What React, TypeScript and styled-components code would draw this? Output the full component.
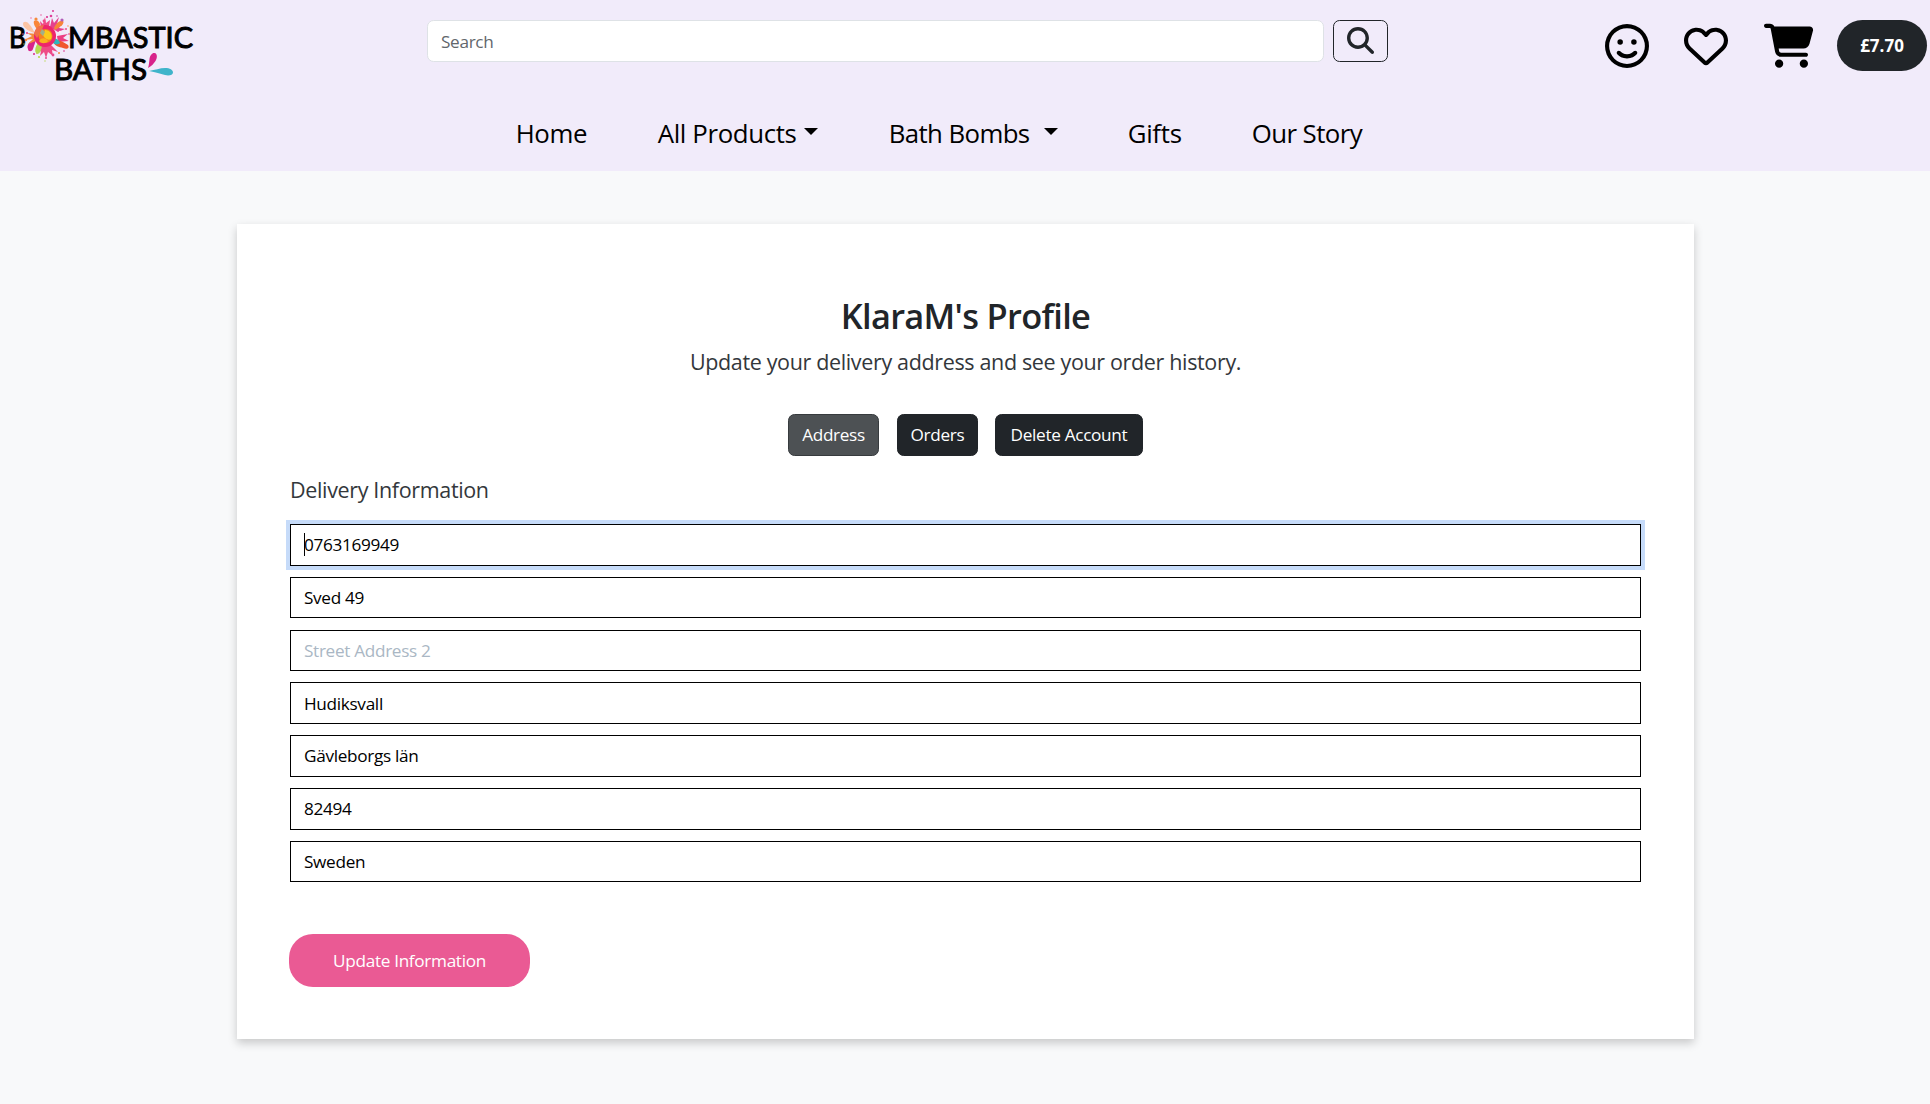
import React from "react";
import styled, { createGlobalStyle } from "styled-components";
import { FaRegFaceSmile, FaRegHeart, FaCartShopping, FaMagnifyingGlass } from "react-icons/fa6";

const GlobalStyle = createGlobalStyle`
  *, *::before, *::after { box-sizing: border-box; }
  html, body { margin: 0; padding: 0; }
  body {
    background: #f8f9fa;
    color: #212529;
    font-family: "Open Sans", "Noto Sans", sans-serif;
    font-size: 17.2px;
    line-height: 26.4px;
    letter-spacing: -0.32px;
    overflow: hidden;
  }
  button, input { font: inherit; letter-spacing: inherit; margin: 0; }
`;

const Page = styled.div`
  min-height: 1104px;
  display: flex;
  flex-direction: column;
`;

const Header = styled.header`
  height: 171px;
  background: #f1ebfa;
  display: flex;
  flex-direction: column;
`;

const TopRow = styled.div`
  height: 92px;
  display: grid;
  grid-template-columns: 427px 961px 1fr;
`;

const LogoLink = styled.a`
  display: block;
  width: 210px;
  height: 92px;
`;

const SearchForm = styled.form`
  display: flex;
  gap: 9px;
  padding-top: 20px;
  align-items: flex-start;
`;

const SearchInput = styled.input`
  flex: 1;
  height: 42px;
  border: 1px solid #dee2e6;
  border-radius: 6.6px;
  padding: 0 13px;
  outline: none;
  &::placeholder { color: #62676c; opacity: 1; }
`;

const SearchButton = styled.button`
  width: 55px;
  height: 42px;
  display: flex;
  align-items: center;
  justify-content: center;
  border: 1px solid #212529;
  border-radius: 6.6px;
  background: transparent;
  color: #212529;
  font-size: 27px;
  padding: 0 0 1px;
`;

const Actions = styled.div`
  display: flex;
  justify-content: flex-end;
  padding: 20px 3px 0 0;
`;

const IconLink = styled.a<{ $gap: number; $size?: number }>`
  display: flex;
  height: 51px;
  align-items: center;
  color: #000;
  font-size: ${(p) => p.$size ?? 44}px;
  margin-right: ${(p) => p.$gap}px;
`;

const Total = styled.a`
  width: 90px;
  height: 51px;
  padding-top: 1px;
  border-radius: 26px;
  background: #212529;
  color: #fff;
  font-weight: 700;
  font-size: 17px;
  letter-spacing: 0;
  display: flex;
  align-items: center;
  justify-content: center;
`;

const Nav = styled.nav`
  display: flex;
  align-items: flex-start;
  height: 79px;
  padding: 23px 0 0 515.7px;
  font-size: 25.8px;
  line-height: 36px;
  color: #000;
`;

const NavItem = styled.a<{ $width: number; $spacing: number }>`
  display: flex;
  align-items: center;
  height: 36px;
  width: ${(p) => p.$width}px;
  letter-spacing: ${(p) => p.$spacing}px;
  white-space: nowrap;
`;

const Caret = styled.span<{ $gap: number }>`
  margin: -3px 0 0 ${(p) => p.$gap}px;
  border: 7px solid transparent;
  border-top-color: #000;
  border-bottom: 0;
`;

const Card = styled.main`
  width: 1457px;
  height: 815px;
  margin: 53px 0 0 237px;
  padding: 68px 53px 0;
  background: #fff;
  box-shadow: 0 4px 9px rgba(0, 0, 0, 0.2);
`;

const Title = styled.h1`
  margin: 0;
  font-size: 34.4px;
  line-height: 48px;
  font-weight: 600;
  letter-spacing: -0.68px;
  text-align: center;
  white-space: nowrap;
`;

const Lead = styled.p`
  margin: 5px 0 0;
  font-size: 21.5px;
  line-height: 33px;
  letter-spacing: -0.35px;
  text-align: center;
  white-space: nowrap;
  color: #33373b;
`;

const Tabs = styled.div`
  display: flex;
  justify-content: center;
  margin-top: 36px;
`;

const Tab = styled.button<{ $width: number; $active?: boolean }>`
  width: ${(p) => p.$width}px;
  height: 42px;
  padding: 0;
  border: 1px solid ${(p) => (p.$active ? "#373b3e" : "#212529")};
  border-radius: 6.6px;
  background: ${(p) => (p.$active ? "#4d5154" : "#212529")};
  color: #fff;
  white-space: nowrap;
  & + & { margin-left: 18px; }
  &:last-child { margin-left: 17px; }
`;

const FormTitle = styled.p`
  margin: 17px 0 0;
  height: 51px;
  font-size: 21.5px;
  line-height: 33px;
  letter-spacing: -0.35px;
  color: #33373b;
`;

const Fields = styled.div`
  display: flex;
  flex-direction: column;
  gap: 11.2px;
`;

const Field = styled.input`
  width: 1351px;
  height: 41.6px;
  border: 1px solid #000;
  border-radius: 0;
  padding: 0 13px;
  background: #fff;
  color: #000;
  outline: none;
  &::placeholder { color: #aab7c4; opacity: 1; }
`;

const FocusedField = styled(Field).attrs({ as: "div" })`
  display: flex;
  align-items: center;
  padding-top: 1px;
  box-shadow: 0 0 0 4px #c6dbf9;
`;

const TextCursor = styled.span`
  width: 1px;
  height: 23px;
  margin: -2px -1px 0 0;
  background: #000;
`;

const SubmitButton = styled.button`
  width: 241px;
  height: 53px;
  margin: 51.4px 0 0 -1px;
  padding: 2px 0 0;
  border: 0;
  border-radius: 24px;
  background: #ea5a94;
  color: #fff;
`;

const LogoText = styled.text`
  font-family: "Lato", sans-serif;
  font-size: 29px;
  font-weight: 400;
  letter-spacing: 0;
  stroke: #000;
  stroke-width: 1px;
`;

const specks: [number, number, number, string][] = [
  [53, 11, 0.9, "#d9268a"], [51, 16, 1.3, "#e0409a"], [47, 17, 1, "#d9268a"], [41, 15, 0.8, "#e8609f"],
  [57, 16, 0.8, "#c73fa0"], [62, 20, 1.6, "#b05cb8"], [66, 29, 1, "#ef4f8a"], [69, 34, 0.8, "#d9268a"],
  [36, 19, 1.6, "#f58a3c"], [31, 18, 0.7, "#f0609a"], [23, 34, 0.8, "#e8609f"], [26, 40, 1.2, "#f58a3c"],
  [24, 44, 0.7, "#b7d84b"], [34, 54, 1, "#d9268a"], [39, 57, 1.1, "#b7d84b"], [46, 58, 1, "#e84a93"],
  [45, 61, 0.7, "#b7d84b"], [53, 55, 1.4, "#e8488f"], [59, 53, 1, "#f58a3c"], [64, 51, 0.8, "#d9268a"],
  [60, 32, 1.2, "#fff0f5"], [27, 33, 1, "#e33a83"], [44, 21, 1.4, "#f04b86"], [68, 26, 0.7, "#f58a3c"],
];

function Logo() {
  return (
    <svg width="210" height="92" viewBox="0 0 210 92">
      <LogoText x="9" y="47.800" textLength="17" lengthAdjust="spacingAndGlyphs">B</LogoText>
      <path d="M35 33C30 32 23 28 23 24c0-3 4-3 6 0 3 3 4 6 6 9z" fill="#fbc4a4" />
      <path d="M39 31c-4-3-6-8-5-10 2-2 5 0 6 3z" fill="#f9863a" />
      <path d="M41 28l-1-7 3 3 2-7 1 6 4-3-1 7z" fill="#f04b86" />
      <path d="M50 27l2-9 2 5 5-6-2 7 6-4-4 8 6 1-7 3z" fill="#e5418e" />
      <path d="M54 28c2-5 6-8 9-7 2 2-2 6-8 9z" fill="#f7843b" />
      <path d="M57 36l11-2-5 4 6 3-11 1z" fill="#ec3f83" />
      <path d="M53 42c5-3 9-1 15 3 2 3-1 5-5 3-4-1-8-2-10-6z" fill="#f0562d" />
      <path d="M50 39c4-2 9 0 10 4-3 3-8 1-10-4z" fill="#2eb5bd" />
      <path d="M36 40c-6 0-10 5-8 9 0 3 4 3 5 0 1-3 2-6 3-9z" fill="#d8238b" />
      <path d="M37 34l-10-1 5 3-8 4 9-1-5 5 10-4z" fill="#f58a3c" />
      <path d="M40 44l-4 10 5-3-1 5 4-4 2 6 2-6 5 4-1-6 6 2-8-8z" fill="#ee4b86" />
      <path d="M38 43c-3 4-4 9-1 11 3 0 5-5 5-10z" fill="#b5d950" />
      <circle cx="45" cy="36" r="11" fill="#ed256c" />
      <path d="M34 34c1-6 5-9 10-9l-3 7-4 6z" fill="#f0714a" />
      <circle cx="45.500" cy="36" r="7" fill="#f58220" />
      <path d="M45 30c5 0 8 5 6 9-3 2-7-1-8-4z" fill="#fbc91b" />
      <path d="M39 41c3-4 7-3 9 0-2 3-7 3-9 0z" fill="#f9b01f" />
      <path d="M42 29l3 3-2 4-3-3z" fill="#9fb08a" />
      {specks.map(([cx, cy, r, fill], i) => (
        <circle key={i} cx={cx} cy={cy} r={r} fill={fill} />
      ))}
      <LogoText x="68" y="47.800" textLength="125" lengthAdjust="spacingAndGlyphs">MBASTIC</LogoText>
      <LogoText x="54" y="79.800" textLength="93" lengthAdjust="spacingAndGlyphs">BATHS</LogoText>
      <path d="M148 68c1-3 1-5 1.500-9 .5-4 3-6.500 5-6 3 .5 3 5 1 8-2 3-4 5-7.500 7z" fill="#d8238b" />
      <path d="M149 71c6-1 11-3 16-3 5 0 8 2 8 4.500 0 2.500-4 3.500-8 2.500-5-1-9-3-16-4z" fill="#3fb4ca" />
    </svg>
  );
}

const savedValues = ["Sved 49", "", "Hudiksvall", "Gävleborgs län", "82494", "Sweden"];

export default function App() {
  return (
    <Page>
      <GlobalStyle />
      <Header>
        <TopRow>
          <LogoLink><Logo /></LogoLink>
          <SearchForm>
            <SearchInput placeholder="Search" />
            <SearchButton type="button"><FaMagnifyingGlass /></SearchButton>
          </SearchForm>
          <Actions>
            <IconLink $gap={35}><FaRegFaceSmile /></IconLink>
            <IconLink $gap={36}><FaRegHeart /></IconLink>
            <IconLink $gap={23.5} $size={49.5}><FaCartShopping /></IconLink>
            <Total>£7.70</Total>
          </Actions>
        </TopRow>
        <Nav>
          <NavItem $width={142} $spacing={-0.4}>Home</NavItem>
          <NavItem $width={231} $spacing={-0.35}>All Products<Caret $gap={7} /></NavItem>
          <NavItem $width={239} $spacing={-0.6}>Bath Bombs<Caret $gap={14} /></NavItem>
          <NavItem $width={124} $spacing={-0.3}>Gifts</NavItem>
          <NavItem $width={120} $spacing={-0.55}>Our Story</NavItem>
        </Nav>
      </Header>
      <Card>
        <Title>KlaraM's Profile</Title>
        <Lead>Update your delivery address and see your order history.</Lead>
        <Tabs>
          <Tab $width={91} $active>Address</Tab>
          <Tab $width={81}>Orders</Tab>
          <Tab $width={148}>Delete Account</Tab>
        </Tabs>
        <FormTitle>Delivery Information</FormTitle>
        <Fields>
          <FocusedField><TextCursor />0763169949</FocusedField>
          {savedValues.map((value, i) => (
            <Field key={i} defaultValue={value} placeholder="Street Address 2" />
          ))}
        </Fields>
        <SubmitButton>Update Information</SubmitButton>
      </Card>
    </Page>
  );
}
